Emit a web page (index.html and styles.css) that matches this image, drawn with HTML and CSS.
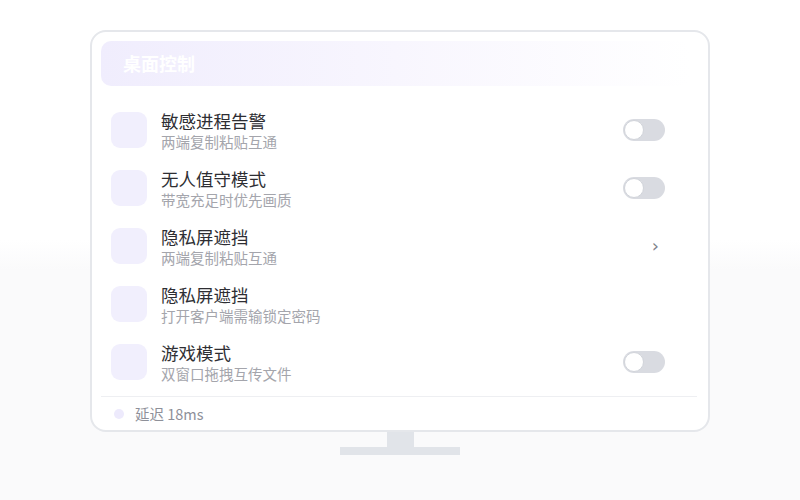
FILE: index.html
```html
<!DOCTYPE html>
<html lang="zh-CN">
<head>
<meta charset="utf-8">
<title>桌面控制</title>
<link rel="stylesheet" href="styles.css">
</head>
<body>
<div class="stage">
  <div class="monitor">
    <div class="header">桌面控制</div>
    <div class="list">
      <div class="row">
        <div class="icon"></div>
        <div class="text"><div class="title">敏感进程告警</div><div class="sub">两端复制粘贴互通</div></div>
        <div class="toggle"><span class="knob"></span></div>
      </div>
      <div class="row">
        <div class="icon"></div>
        <div class="text"><div class="title">无人值守模式</div><div class="sub">带宽充足时优先画质</div></div>
        <div class="toggle"><span class="knob"></span></div>
      </div>
      <div class="row">
        <div class="icon"></div>
        <div class="text"><div class="title">隐私屏遮挡</div><div class="sub">两端复制粘贴互通</div></div>
        <div class="chev">›</div>
      </div>
      <div class="row">
        <div class="icon"></div>
        <div class="text"><div class="title">隐私屏遮挡</div><div class="sub">打开客户端需输锁定密码</div></div>
      </div>
      <div class="row">
        <div class="icon"></div>
        <div class="text"><div class="title">游戏模式</div><div class="sub">双窗口拖拽互传文件</div></div>
        <div class="toggle"><span class="knob"></span></div>
      </div>
    </div>
    <div class="footer"><span class="dot"></span><span class="lat">延迟 18ms</span></div>
  </div>
  <div class="neck"></div>
  <div class="base"></div>
</div>
</body>
</html>
```
FILE: styles.css
```css
html, body {
  margin: 0;
  padding: 0;
}
body {
  width: 800px;
  height: 500px;
  background: linear-gradient(to bottom, #ffffff 0, #ffffff 240px, #fafafb 270px, #fafafb 100%);
  font-family: "Noto Sans CJK SC", "Noto Sans", sans-serif;
  overflow: hidden;
}
.stage {
  display: flex;
  flex-direction: column;
  align-items: center;
  padding-top: 30px;
}
.monitor {
  width: 620px;
  height: 402px;
  box-sizing: border-box;
  border: 2px solid #e5e7eb;
  border-radius: 16px;
  background: #fff;
  padding: 9px 10px 0 9px;
  display: flex;
  flex-direction: column;
}
.header {
  height: 45px;
  border-radius: 10px;
  background: linear-gradient(90deg, #f0edfd 0%, #f8f6fe 50%, rgba(255,255,255,0) 100%);
  color: #fff;
  font-size: 18px;
  font-weight: 700;
  line-height: 45px;
  padding-left: 22px;
  margin-right: 8px;
}
.list {
  margin-top: 15px;
  display: flex;
  flex-direction: column;
}
.row {
  height: 58px;
  display: flex;
  align-items: center;
  padding: 0 33px 0 10px;
}
.icon {
  width: 36px;
  height: 36px;
  border-radius: 9px;
  background: #f1effd;
  flex: none;
}
.text {
  margin-left: 14px;
  flex: 1;
  display: flex;
  flex-direction: column;
  margin-top: 2px;
}
.title {
  font-size: 17.5px;
  line-height: 22px;
  color: #2e2e33;
}
.sub {
  font-size: 14.5px;
  line-height: 20px;
  color: #a4a5ac;
}
.toggle {
  width: 42px;
  height: 22px;
  border-radius: 11px;
  background: #d9dbe1;
  position: relative;
  flex: none;
}
.knob {
  position: absolute;
  left: 1px;
  top: 1px;
  width: 18px;
  height: 18px;
  border-radius: 50%;
  background: #fff;
  border: 1px solid #d1d4da;
}
.chev {
  color: #80838b;
  font-size: 18px;
  font-family: "DejaVu Sans", sans-serif;
  margin-right: 6px;
  line-height: 18px;
}
.footer {
  margin-top: 5px;
  margin-right: 1px;
  border-top: 1px solid #eeeff2;
  flex: 1;
  display: flex;
  align-items: center;
  padding-left: 13px;
}
.dot {
  width: 10px;
  height: 10px;
  border-radius: 50%;
  background: #edeafc;
}
.lat {
  margin-left: 11px;
  font-size: 14.5px;
  color: #8e9099;
}
.neck {
  width: 27px;
  height: 15px;
  background: #e1e4e9;
}
.base {
  width: 120px;
  height: 8px;
  background: #e1e4e9;
}
```
